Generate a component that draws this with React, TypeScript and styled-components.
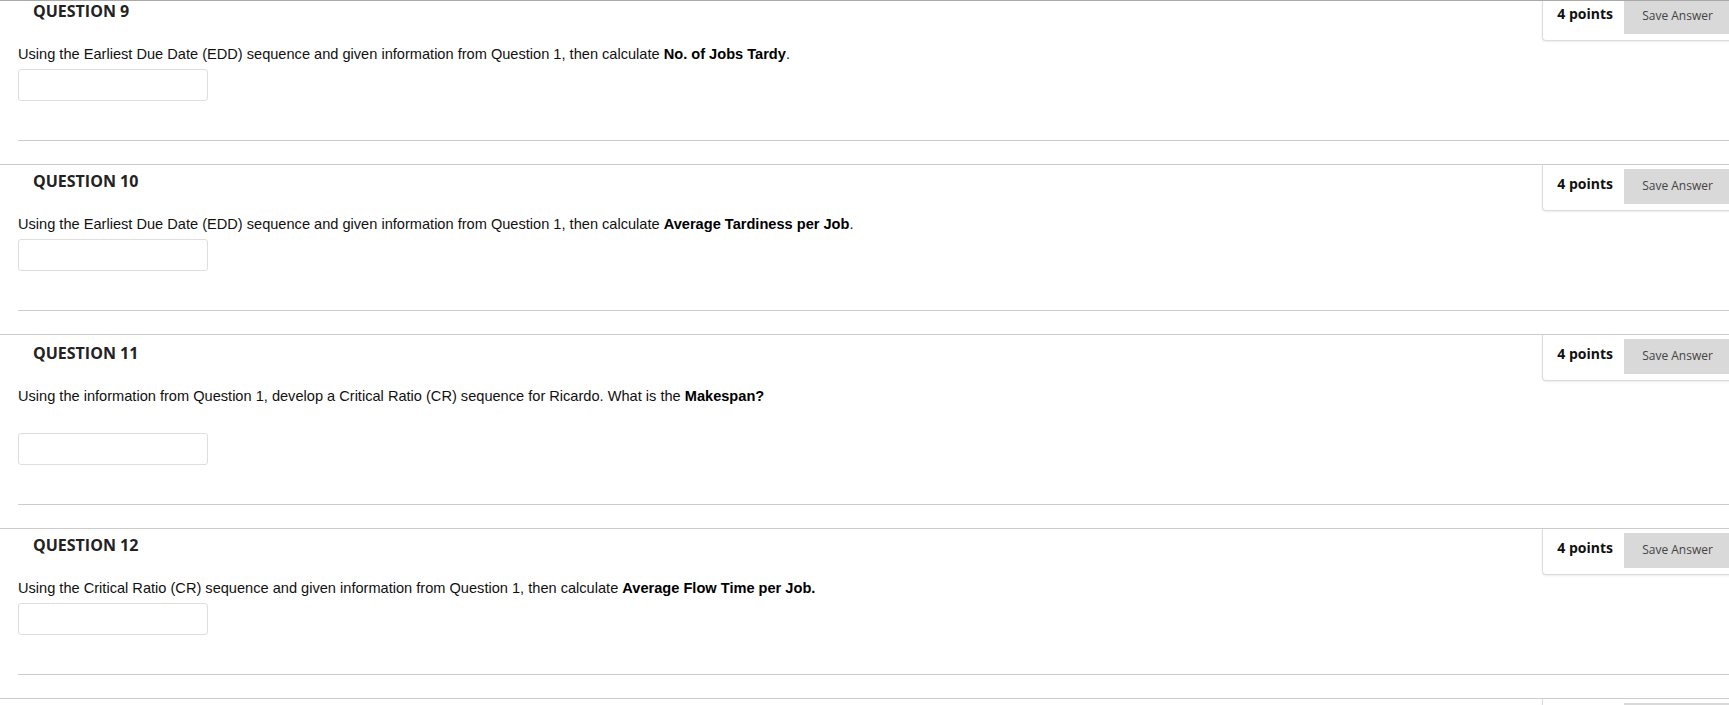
import React from 'react';
import styled, { createGlobalStyle } from 'styled-components';

interface Question {
  id: number;
  prompt: string;
  strong: string;
  tail?: string;
  blankLine?: boolean;
  shift?: number;
}

const questions: Question[] = [
  {
    id: 9,
    prompt: 'Using the Earliest Due Date (EDD) sequence and given information from Question 1, then calculate ',
    strong: 'No. of Jobs Tardy',
    tail: '.',
  },
  {
    id: 10,
    prompt: 'Using the Earliest Due Date (EDD) sequence and given information from Question 1, then calculate ',
    strong: 'Average Tardiness per Job',
    tail: '.',
  },
  {
    id: 11,
    prompt: 'Using the information from Question 1, develop a Critical Ratio (CR) sequence for Ricardo. What is the ',
    strong: 'Makespan?',
    blankLine: true,
    shift: 2,
  },
  {
    id: 12,
    prompt: 'Using the Critical Ratio (CR) sequence and given information from Question 1, then calculate ',
    strong: 'Average Flow Time per Job.',
  },
];

const GlobalStyle = createGlobalStyle`
  html, body {
    margin: 0;
    padding: 0;
    background: #fff;
    overflow: hidden;
  }
`;

const Page = styled.div`
  width: 100%;
  height: 705px;
  border-top: 1px solid #a9a9a9;
  overflow: hidden;
  box-sizing: border-box;
`;

const List = styled.div`
  margin-top: -7px;
`;

const Section = styled.section`
  border-top: 1px solid #ccc;
`;

const HeaderRow = styled.div`
  display: flex;
  justify-content: space-between;
  align-items: stretch;
  height: 46px;
`;

const Heading = styled.h2<{ $shift?: number }>`
  margin: 0;
  padding: ${p => 5 + (p.$shift ?? 0)}px 0 0 33px;
  font-family: 'Open Sans', 'DejaVu Sans', sans-serif;
  font-size: 16px;
  line-height: 22px;
  font-weight: 700;
  color: #222;
`;

const PointsBox = styled.div`
  display: flex;
  align-items: center;
  gap: 11px;
  margin-right: -2px;
  padding: 3px 0 6px 14px;
  background: #fff;
  border-left: 1px solid #dcdcdc;
  border-bottom: 1px solid #dcdcdc;
  border-radius: 0 0 0 4px;
  box-shadow: 0 1px 2px rgba(0, 0, 0, 0.08);
`;

const Points = styled.span`
  font-family: 'Open Sans', 'DejaVu Sans', sans-serif;
  font-size: 14px;
  font-weight: 700;
  color: #111;
  padding-bottom: 5px;
`;

const SaveButton = styled.button`
  width: 107px;
  height: 35px;
  border: none;
  background: #d9d9d9;
  font-family: 'Open Sans', 'DejaVu Sans', sans-serif;
  font-size: 12px;
  color: #444;
  padding: 0 0 2px;
  cursor: pointer;
`;

const Body = styled.div<{ $shift?: number }>`
  padding: ${p => 5 + (p.$shift ?? 0)}px 0 0 18px;
`;

const Prompt = styled.p<{ $blankLine?: boolean }>`
  margin: 0 0 ${p => (p.$blankLine ? 28 : 6)}px;
  font-family: 'Liberation Sans', Arial, sans-serif;
  font-size: 14.6px;
  line-height: 17px;
  color: #111;

  strong {
    font-weight: 700;
    color: #000;
  }
`;

const AnswerInput = styled.input`
  display: block;
  width: 190px;
  height: 32px;
  box-sizing: border-box;
  border: 1px solid #dedede;
  border-radius: 3px;
  background: #fff;
  outline: none;
`;

const Divider = styled.hr`
  margin: 39px 0 23px;
  border: none;
  border-top: 1px solid #ccc;
  height: 0;
`;

const QuestionBlock = ({ q }: { q: Question }) => (
  <Section>
    <HeaderRow>
      <Heading $shift={q.shift}>QUESTION {q.id}</Heading>
      <PointsBox>
        <Points>4 points</Points>
        <SaveButton>Save Answer</SaveButton>
      </PointsBox>
    </HeaderRow>
    <Body $shift={q.shift}>
      <Prompt $blankLine={q.blankLine}>
        {q.prompt}
        <strong>{q.strong}</strong>
        {q.tail}
      </Prompt>
      <AnswerInput type="text" />
      <Divider />
    </Body>
  </Section>
);

const App = () => (
  <Page>
    <GlobalStyle />
    <List>
      {questions.map(q => (
        <QuestionBlock key={q.id} q={q} />
      ))}
      <Section>
        <HeaderRow>
          <span />
          <PointsBox>
            <Points>4 points</Points>
            <SaveButton>Save Answer</SaveButton>
          </PointsBox>
        </HeaderRow>
      </Section>
    </List>
  </Page>
);

export default App;
